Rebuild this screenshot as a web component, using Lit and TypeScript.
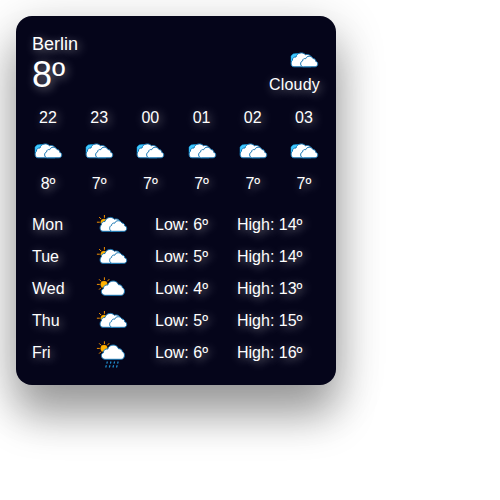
import { LitElement, html, svg, css } from "lit";
import { customElement, property } from "lit/decorators.js";

type Kind = "cloudy" | "broken" | "partly" | "rain";

const sun = svg`<path class="ray" d="M8.4 4.3v2.7M8 15.8v2.4M.9 11.4h2.9M3.1 6.3l2 2M13.3 6.1l-2 2.2M3.1 16.6l2-2"/><circle class="sun" cx="8" cy="11.4" r="3.3"/>`;
const peekingSun = svg`<path class="ray" d="M8.4 6v2.8M.9 13.2h2.9M3.1 8l2 2"/><circle class="sun" cx="8" cy="13.2" r="3.2"/>`;
const pair = svg`
  <path class="cloud" d="M7 22.3C3.4 22.3 3.5 17 5.4 15.9C5.2 13.3 7.2 12.3 9 12.5C9.8 8.2 15.8 7 18.4 10.2C21.4 9.3 24.4 11 24.5 14L24 22.3Z"/>
  <path class="cloud" d="M16.5 22.3C12.8 22.3 12.9 17 15.6 16.4C15.5 14.5 17.3 13.7 18.7 14.2C19.7 11 24.4 10.9 26 14C28 14 28.9 15.8 28.7 16.8C31.6 17.3 31.3 22.3 28.1 22.3Z"/>`;
const single = svg`<path class="cloud" d="M9.3 22.3C4.8 22.3 4.2 16.6 7.4 15.8C7.2 13 9.6 11.4 11.7 12.1C13.2 6.8 20.8 6.7 22.5 11.7C24.8 11.4 26.4 13.1 26.3 14.6C29.5 15.6 29.2 22.3 25.2 22.3Z"/>`;

const shapes = {
  cloudy: svg`<g transform="translate(-1 .5)">
    <path class="sky" d="M4 18V11.6L6 9.4L9 9L13 9V13L8 18Z"/>${pair}</g>`,
  broken: svg`${peekingSun}${pair}`,
  partly: svg`${sun}${single}`,
  rain: svg`${sun}${single}
    <path class="drop" d="M11.4 24.5l-.6 2.2M10.4 28.3l-.7 2.2M15 24.5l-.6 2.2M14 28.3l-.7 2.2M18.6 24.5l-.6 2.2M17.6 28.3l-.7 2.2M22.2 24.5l-.6 2.2M21.2 28.3l-.7 2.2"/>`,
};

@customElement("weather-icon")
class WeatherIcon extends LitElement {
  @property() kind: Kind = "cloudy";
  static styles = css`
    :host { display: block; width: 32px; height: 32px; }
    svg { display: block; width: 32px; height: 32px; }
    .cloud { fill: #fff; stroke: #1675b2; stroke-width: 1; stroke-linejoin: round; }
    .sky { fill: #40c9ff; stroke: #159bdc; stroke-width: 0.5; stroke-linejoin: round; }
    .sun { fill: #ffb300; stroke: #f59a00; stroke-width: 0.4; }
    .ray { fill: none; stroke: #f29100; stroke-width: 1; }
    .drop { fill: none; stroke: #1f8fd0; stroke-width: 1.2; }
  `;
  render() {
    return html`<svg viewBox="0 0 32 32" aria-hidden="true">${shapes[this.kind]}</svg>`;
  }
}

const hours = [["22", 8], ["23", 7], ["00", 7], ["01", 7], ["02", 7], ["03", 7]];
const days: [string, Kind, number, number][] = [
  ["Mon", "broken", 6, 14],
  ["Tue", "broken", 5, 14],
  ["Wed", "partly", 4, 13],
  ["Thu", "broken", 5, 15],
  ["Fri", "rain", 6, 16],
];

@customElement("app-root")
class AppRoot extends LitElement {
  static styles = css`
    :host { display: block; padding: 16px; height: 500px; box-sizing: border-box; overflow: hidden; background: #fff; }
    .card {
      box-sizing: border-box; width: 320px; height: 369px; padding: 16px;
      border-radius: 16px; background: #05051a; color: #fff;
      font: 16px/18px "Liberation Sans", Arial, sans-serif;
      text-shadow: 2px 2px 10px rgba(255, 255, 255, 0.5);
      box-shadow: 0 12px 50px rgba(0, 0, 0, 0.24), 0 33px 40px rgba(0, 0, 0, 0.27);
    }
    .header { display: flex; justify-content: space-between; align-items: flex-end; height: 62px; }
    .city { font-size: 18px; line-height: 21px; padding-top: 2px; }
    .now { font-size: 36px; line-height: 39px; }
    .state { display: flex; flex-direction: column; align-items: flex-end; }
    .label { letter-spacing: 0.2px; }
    .hours { display: flex; justify-content: space-between; margin-top: 15px; }
    .hour { width: 32px; display: flex; flex-direction: column; align-items: center; gap: 8px; }
    .days { margin-top: 16px; }
    .day { display: grid; grid-template-columns: 64px 59px 82px auto; height: 32px; align-items: center; }
  `;
  render() {
    return html`<main class="card">
      <header class="header">
        <div><div class="city">Berlin</div><div class="now">8º</div></div>
        <div class="state"><weather-icon kind="cloudy"></weather-icon><span class="label">Cloudy</span></div>
      </header>
      <section class="hours">
        ${hours.map(([h, t]) => html`<div class="hour"><span>${h}</span><weather-icon kind="cloudy"></weather-icon><span>${t}º</span></div>`)}
      </section>
      <section class="days">
        ${days.map(([d, k, lo, hi]) => html`<div class="day"><span>${d}</span><weather-icon .kind=${k}></weather-icon><span>Low: ${lo}º</span><span>High: ${hi}º</span></div>`)}
      </section>
    </main>`;
  }
}
